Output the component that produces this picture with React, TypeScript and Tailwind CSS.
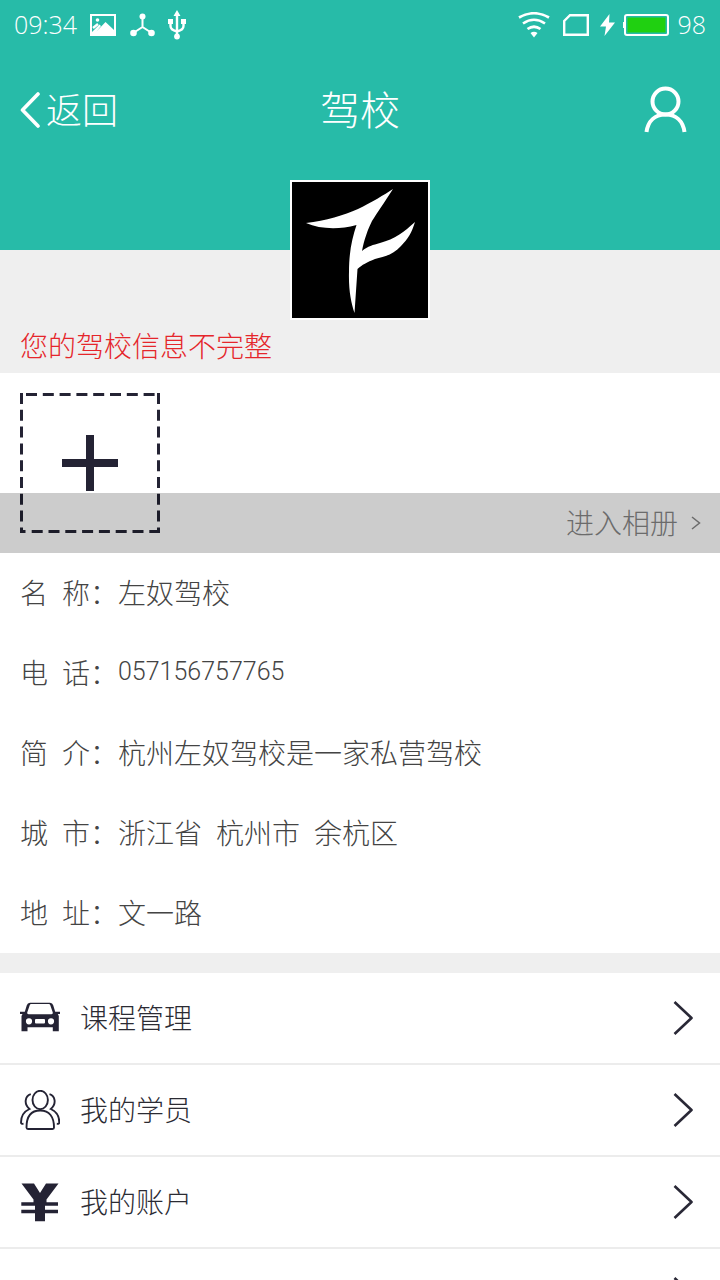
import React from "react";

type Detail = { label: [string, string]; parts: string[]; numeric?: boolean };

const details: Detail[] = [
  { label: ["名", "称"], parts: ["左奴驾校"] },
  { label: ["电", "话"], parts: ["057156757765"], numeric: true },
  { label: ["简", "介"], parts: ["杭州左奴驾校是一家私营驾校"] },
  { label: ["城", "市"], parts: ["浙江省", "杭州市", "余杭区"] },
  { label: ["地", "址"], parts: ["文一路"] },
];

function StatusBar() {
  return (
    <div className="flex h-[50px] items-center justify-between px-[14px] font-['Open_Sans','Noto_Sans_CJK_SC',sans-serif] text-[25px] font-light">
      <div className="flex items-center">
        <span className="w-[76px]">09:34</span>
        <svg className="h-[22px] w-[26px]" viewBox="0 0 26 22" aria-hidden="true">
          <path fillRule="evenodd" fill="currentColor" d="M0 0h26v22H0zM2 2v16l1.500-1.500 6-6 1.500 1.500-4.500 5.500 9-9.500 8.500 8V2z" />
          <circle cx="7.500" cy="6" r="1.800" fill="currentColor" />
          <path d="M3 14 8 10" stroke="currentColor" strokeWidth="2.500" />
        </svg>
        <svg className="ml-[14px] h-6 w-[25px]" viewBox="0 0 25 24" aria-hidden="true">
          <path d="M12.500 4v10M12.500 14 4 19.500M12.500 14 21 19.500" stroke="currentColor" strokeWidth="2" fill="none" />
          <circle cx="12.500" cy="3.500" r="3" fill="currentColor" />
          <circle cx="3.500" cy="20" r="3.300" fill="currentColor" />
          <circle cx="21.500" cy="20" r="3.300" fill="currentColor" />
        </svg>
        <svg className="ml-3 h-[30px] w-5" viewBox="0 0 20 30" aria-hidden="true">
          <path d="M10 4v22M3.500 12v4q0 4 6.500 5.500M16.500 12v4q0 4-6.500 5.500" stroke="currentColor" strokeWidth="2.400" fill="none" />
          <path d="M10 0 13.500 6h-7zM1 9h5v5H1zM14 9h5v5h-5z" fill="currentColor" />
          <circle cx="10" cy="26.500" r="2.900" fill="currentColor" />
        </svg>
      </div>
      <div className="flex items-center">
        <svg className="h-[26px] w-8" viewBox="0 0 32 26" aria-hidden="true">
          <path d="M1 5.500Q16-3 31 5.500M5 11.500Q16 4 27 11.500M9.500 17Q16 12.500 22.500 17" stroke="currentColor" strokeWidth="2.700" fill="none" />
          <path d="M12.500 21q3.500-2.500 7 0L16 25.500z" fill="currentColor" />
        </svg>
        <svg className="ml-[13px] h-[22px] w-[26px]" viewBox="0 0 26 22" aria-hidden="true">
          <path d="M7 1.200h17.800v19.600H1.200V7z" stroke="currentColor" strokeWidth="2.400" fill="none" />
        </svg>
        <svg className="ml-[11px] h-[22px] w-[15px]" viewBox="0 0 15 22" aria-hidden="true">
          <path d="M9.500 0 0 12.500h6L4.500 22 15 8.500H9z" fill="currentColor" />
        </svg>
        <svg className="ml-2 h-[22px] w-[46px]" viewBox="0 0 46 22" aria-hidden="true">
          <rect x="2" y="1" width="43" height="20" rx="2" stroke="currentColor" strokeWidth="2" fill="none" />
          <path d="M0 8h2v6H0z" fill="currentColor" />
          <rect x="4.500" y="3.500" width="38" height="15" fill="#20d011" />
        </svg>
        <span className="ml-2">98</span>
      </div>
    </div>
  );
}

function RowChevron() {
  return (
    <svg className="ml-auto mr-[7px] h-9 w-5 shrink-0" viewBox="0 0 20 36" fill="none" aria-hidden="true">
      <path d="M1.500 2 18.500 18 1.500 34" stroke="#292836" strokeWidth="2.600" strokeLinejoin="round" />
    </svg>
  );
}

function CarIcon() {
  return (
    <svg className="h-10 w-10" viewBox="0 0 40 40" aria-hidden="true">
      <path
        fill="#242334"
        fillRule="evenodd"
        d="M10 4.700h20q2.500 0 3.200 2.500l2 6.600H40v2.200h-2.200l1 2v15.300h-6v-4H7.500v4h-6V18l1-2H0v-2.200h4.800l2-6.600Q7.500 4.700 10 4.700zM9.800 7 7.300 14.300q-.5 2 1.500 2h22.400q2 0 1.500-2L30.200 7q-.3-1-1.300-1H11.100q-1 0-1.300 1zM9 20.200a3.100 3.100 0 1 0 0 6.200 3.100 3.100 0 0 0 0-6.200zM31 20.200a3.100 3.100 0 1 0 0 6.200 3.100 3.100 0 0 0 0-6.200zM16 21q-1 0-1 1v2.600q0 1 1 1h8q1 0 1-1V22q0-1-1-1z"
      />
    </svg>
  );
}

function PeopleIcon() {
  return (
    <svg className="h-10 w-10" viewBox="0 0 40 40" fill="none" stroke="#242334" strokeWidth="1.900" aria-hidden="true">
      <ellipse cx="20.200" cy="10" rx="7.700" ry="9.200" />
      <path d="M8 39q-1.500 0-1.500-1.500C6.500 27 11 20.500 20.200 20.500S34 27 34 37.500q0 1.500-1.500 1.500z" />
      <path d="M10.800 4.200C5 6 3.500 14 9.500 19 4 21.500 1 27 1 32.500q0 1.500 2.500 1.300M29.500 4.200C35.300 6 36.800 14 30.800 19 36.300 21.500 39.300 27 39.300 32.500q0 1.500-2.500 1.300" />
    </svg>
  );
}

function YenIcon() {
  return (
    <svg className="h-10 w-10" viewBox="0 0 40 40" aria-hidden="true">
      <path fill="#242334" d="M1.500 1.500H14l6 9.500 6-9.500h12.500L26.500 17.500v2.700H38v3.500H25v4H38v3.500H25v8H15v-8H1.300v-3.500H15v-4H1.300v-3.500H13.500v-2.700z" />
    </svg>
  );
}

const menu = [
  { text: "课程管理", Icon: CarIcon },
  { text: "我的学员", Icon: PeopleIcon },
  { text: "我的账户", Icon: YenIcon },
];

export default function App() {
  return (
    <div className="h-screen overflow-hidden bg-[#efefef] font-['Noto_Sans_CJK_SC',sans-serif] text-[28px] font-light text-[#444]">
      <header className="h-[250px] bg-[#27bba8] text-white">
        <StatusBar />
        <div className="grid h-[120px] grid-cols-3 items-center px-5">
          <button type="button" className="flex items-center justify-self-start text-[36px]">
            <svg className="mr-1.5 h-[38px] w-5" viewBox="0 0 20 38" fill="none" aria-hidden="true">
              <path d="M18 3 2.500 19 18 35" stroke="currentColor" strokeWidth="3.600" strokeLinecap="round" strokeLinejoin="round" />
            </svg>
            <span className="pb-1">返回</span>
          </button>
          <h1 className="pb-1 text-center text-[40px]">驾校</h1>
          <button type="button" aria-label="个人中心" className="mr-3 justify-self-end">
            <svg className="h-12 w-[46px]" viewBox="0 0 46 48" fill="none" aria-hidden="true">
              <circle cx="23.500" cy="15.500" r="13" stroke="currentColor" strokeWidth="4" />
              <path d="M4.500 46C6 35 13 28.500 23.500 28.500S41 35 42.500 46" stroke="currentColor" strokeWidth="4" />
            </svg>
          </button>
        </div>
      </header>

      <section className="-mt-[70px] flex flex-col">
        <svg className="h-[140px] w-[140px] self-center border-2 border-white bg-black" viewBox="0 0 136 136" role="img" aria-label="驾校头像">
          <path
            fill="#fff"
            d="M101 7C92 21 85 31 80 39 76 47 72 58 70 69 76 64 81 63 88 61 103 57 112 50 123 40 120 50 116 57 109 64 101 73 91 75 83 77 75 80 70 83 65.500 87L62.500 131C59 120 56.500 108 57 90 57 70 60 57 64.500 43 46 48 28 47 14 41 34 39 52 33 66 27 80 20 92 13 101 7z"
          />
        </svg>
        <p className="h-[53px] px-5 leading-[50px] text-[#e5262b]">您的驾校信息不完整</p>
      </section>

      <section className="relative h-[180px] bg-white p-5">
        <button type="button" aria-label="添加照片" className="block">
          <svg className="h-[140px] w-[140px]" viewBox="0 0 140 140" fill="none" stroke="#242334" aria-hidden="true">
            <path d="M6 1.500H136M11.700 138.500H136" strokeWidth="3" strokeDasharray="11 5.800" />
            <path d="M1.500 0V140M138.500 0V140" strokeWidth="3" strokeDasharray="11 5.800" />
            <path d="M0 1.500H3M137 1.500H140M0 138.500H5.500M132 138.500H140" strokeWidth="3" />
            <path d="M42 70H98M70 42V98" strokeWidth="8" />
          </svg>
        </button>
        <a href="#album" className="absolute inset-x-0 bottom-0 flex h-[60px] items-center justify-end bg-black/20 pr-[18px] text-[#6b6b6b]">
          <span className="pb-0.5">进入相册</span>
          <svg className="ml-3 h-4 w-3" viewBox="0 0 12 16" fill="none" stroke="currentColor" strokeWidth="1.500" aria-hidden="true">
            <path d="M2 2 9.500 8 2 14" />
          </svg>
        </a>
      </section>

      <dl className="bg-white px-5">
        {details.map(({ label, parts, numeric }) => (
          <div key={label.join("")} className="flex h-20 items-center pb-0.5">
            <dt className="flex w-[98px] shrink-0 gap-[14px]">
              <span>{label[0]}</span>
              <span>{label[1]}：</span>
            </dt>
            <dd className={numeric ? "font-['Roboto',sans-serif] text-[25px]" : "flex gap-[14px]"}>
              {parts.map((part) => (
                <span key={part}>{part}</span>
              ))}
            </dd>
          </div>
        ))}
      </dl>

      <nav className="mt-5 bg-white text-[#2b2b33]">
        {menu.map(({ text, Icon }) => (
          <a key={text} href="#menu" className="flex h-[92px] items-center border-b-2 border-[#ececec] px-5">
            <Icon />
            <span className="ml-5 pb-0.5">{text}</span>
            <RowChevron />
          </a>
        ))}
        <a href="#more" aria-label="更多" className="flex h-[92px] items-center border-b-2 border-[#ececec] px-5">
          <RowChevron />
        </a>
      </nav>
    </div>
  );
}
